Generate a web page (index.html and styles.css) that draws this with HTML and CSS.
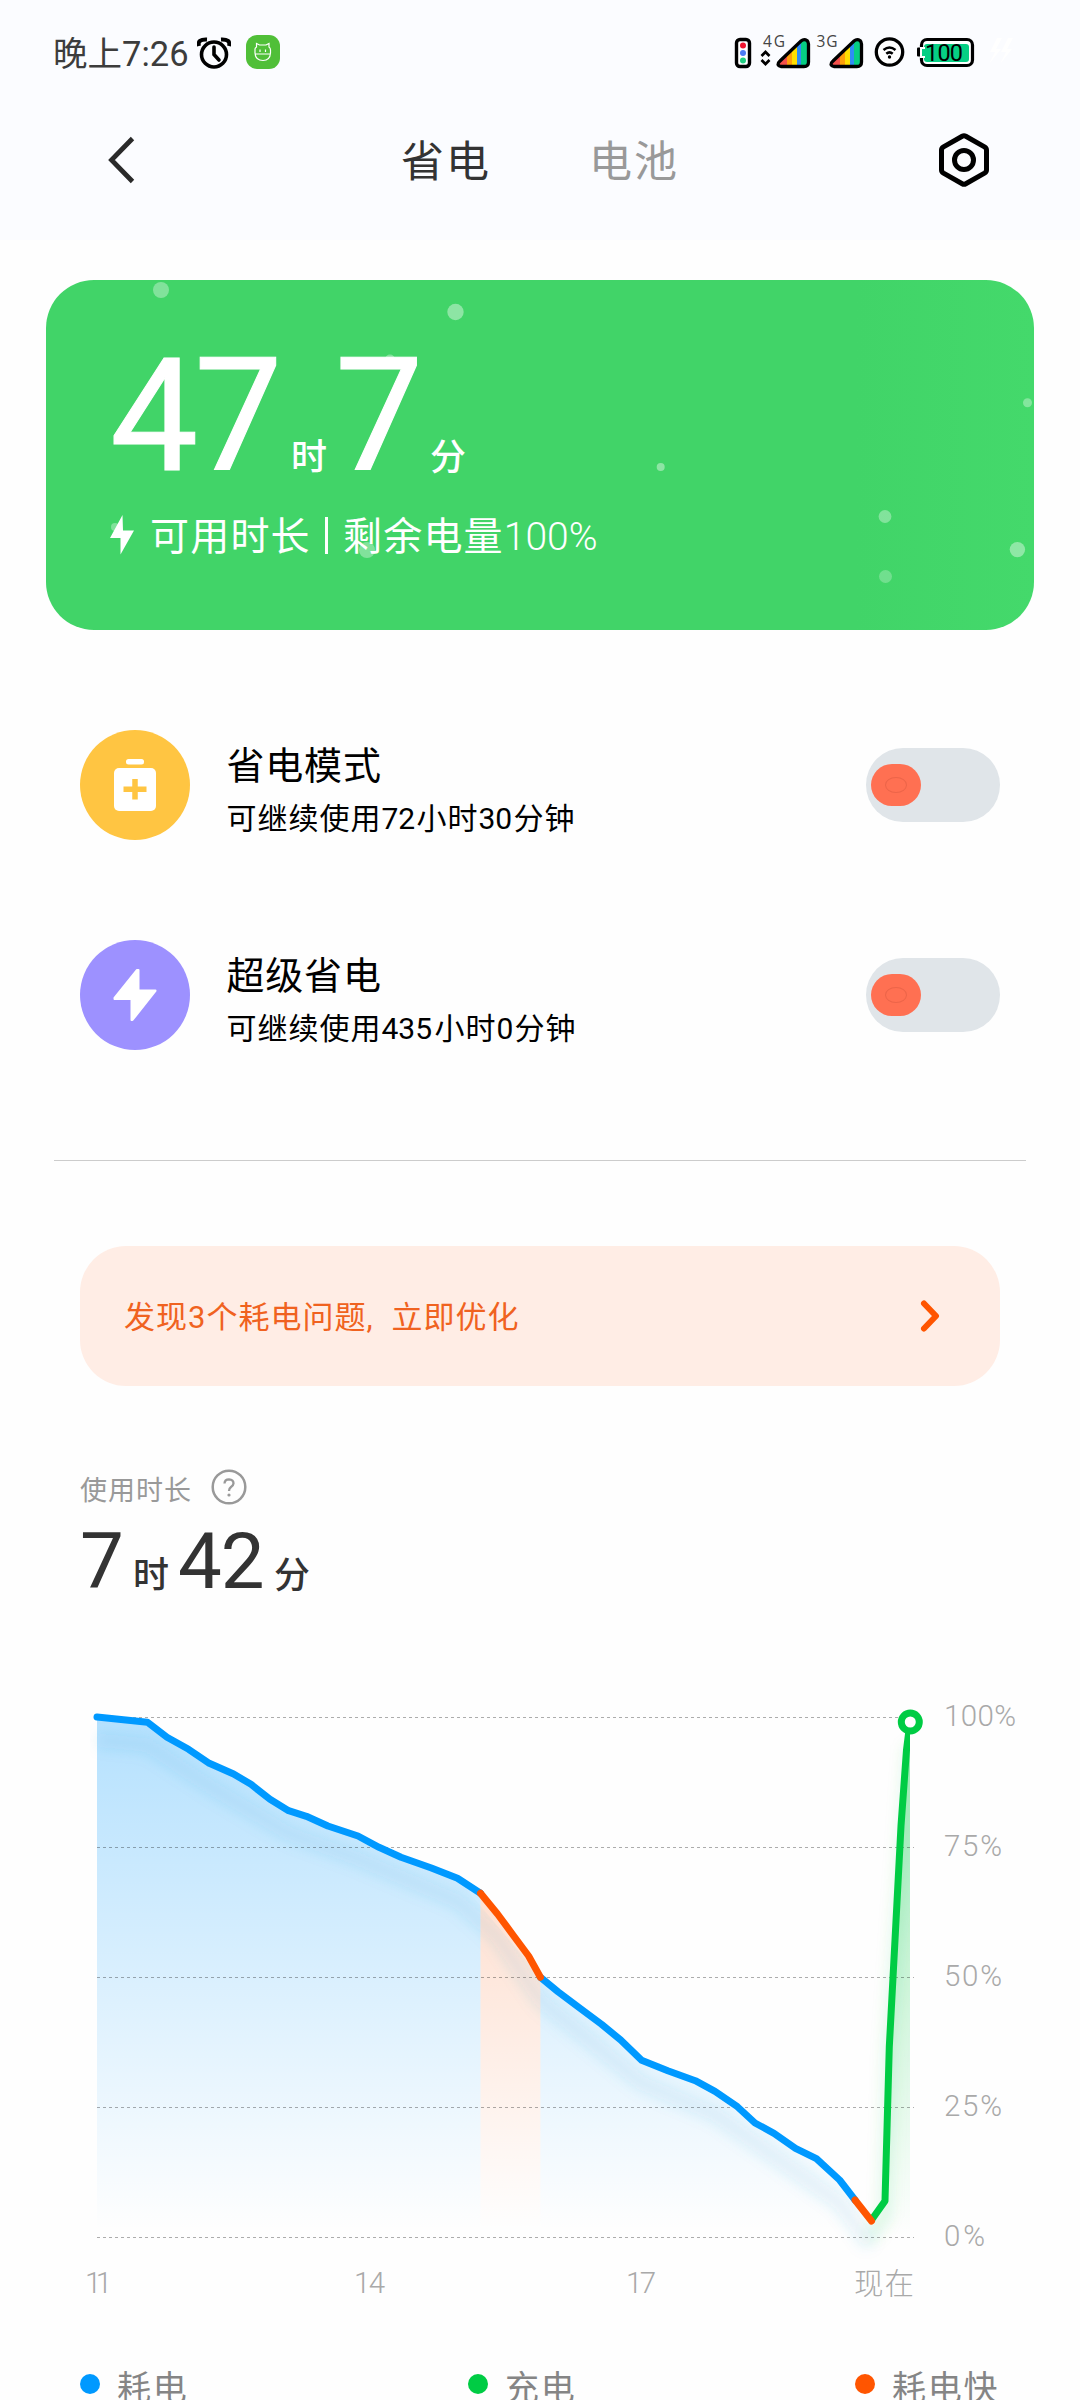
FILE: index.html
```html
<!DOCTYPE html>
<html lang="zh-CN">
<head>
<meta charset="utf-8">
<title>省电</title>
<link rel="stylesheet" href="styles.css">
</head>
<body>
<header class="header">
  <div class="status">
    <span class="clock">晚上7:26</span>
    <svg class="alarm" width="34" height="36" viewBox="197 36 34 36"><path d="M199 46Q197 39 207 39.500M229 46Q231 39 221 39.500" fill="none" stroke="#000" stroke-width="4"/><circle cx="214" cy="54.500" r="12.500" fill="none" stroke="#000" stroke-width="3.600"/><path d="M214 47V54.500L219 60" fill="none" stroke="#000" stroke-width="3.600" stroke-linecap="round"/></svg>
    <svg class="app" width="34" height="34" viewBox="246 35 34 34"><rect x="246" y="35" width="34" height="34" rx="11" fill="#50bf38"/><g fill="none" stroke="#fff" stroke-width="1.200"><path d="M255 53V49Q255 48 256.500 47V43.500L259.500 45H266L269 43.500V47Q270.500 48 270.500 50V53Q270 60.500 263 60.500Q255.500 60.500 255 53ZM255.500 54H270"/><path d="M260 49.500V52M265.500 49.500V52"/></g></svg>
    <svg class="indicators" width="300" height="44" viewBox="730 30 300 44">
      <rect x="736.500" y="39.500" width="13" height="27" rx="3.500" fill="#fff" stroke="#000" stroke-width="3.400"/>
      <circle cx="743" cy="45.500" r="3" fill="#f0142f"/><circle cx="743" cy="53" r="3" fill="#4b7bf5"/><circle cx="743" cy="60.500" r="3" fill="#21cf83"/>
      <path d="M761.500 56L765.500 52L769.500 56M761.500 60L765.500 64L769.500 60" fill="none" stroke="#000" stroke-width="2.700"/>
      <defs>
        <linearGradient id="rainbow"><stop offset=".28" stop-color="#f5504b"/><stop offset=".28" stop-color="#ff9f0a"/><stop offset=".45" stop-color="#ff9f0a"/><stop offset=".45" stop-color="#ffe000"/><stop offset=".62" stop-color="#ffe000"/><stop offset=".62" stop-color="#2f8df5"/><stop offset=".77" stop-color="#2f8df5"/><stop offset=".77" stop-color="#06ce84"/></linearGradient>
        <path id="signal" d="M780 61L801 41Q804 38.500 807 40.500Q808.500 42 808.500 44V62Q808.500 66.500 804 66.500H781Q775.500 65 780 61Z" fill="url(#rainbow)" stroke="#000" stroke-width="3.300"/>
      </defs>
      <use href="#signal"/><use href="#signal" x="53"/>
      <text x="763" y="46.500" class="net" textLength="22">4G</text><text x="816.500" y="46.500" class="net" textLength="21">3G</text>
      <circle cx="889.500" cy="52" r="13.200" fill="#fff" stroke="#000" stroke-width="3.300"/>
      <path d="M883.500 50Q889.500 45 895.500 50M886.300 53.800Q889.500 51 892.700 53.800" fill="none" stroke="#000" stroke-width="2.500"/><circle cx="889.500" cy="57" r="1.700"/>
      <rect x="921.500" y="39.500" width="51" height="26" rx="5.500" fill="#fff" stroke="#000" stroke-width="3.200"/><rect x="917" y="47.500" width="3.500" height="9" rx="1"/><rect x="924" y="44" width="45" height="18" rx="3" fill="#06cf84"/><rect x="920" y="47" width="5" height="11" fill="#fff"/><rect x="922" y="49" width="4" height="7" fill="#06cf84"/>
      <text x="925" y="61" class="battery" textLength="38">100</text>
      <path d="M997 38L990 52H995L989 64L1001 49H996L1002 38ZM1008 38L1001 52H1006L1000 64L1012 49H1007L1013 38Z" fill="#fff"/>
    </svg>
  </div>
  <nav class="nav">
    <svg class="back" width="30" height="50" viewBox="0 0 30 50"><path d="M25.500 3.500L4.500 25L25.500 46.500" fill="none" stroke="#2a2a2a" stroke-width="4.800"/></svg>
    <span class="tab active">省电</span>
    <span class="tab">电池</span>
    <svg class="gear" width="56" height="60" viewBox="936 130 56 60"><path d="M962.200 136.300Q964 135.300 965.800 136.300L984.500 146.800Q986.500 148 986.500 150V170Q986.500 172 984.500 173.200L965.800 183.700Q964 184.700 962.200 183.700L943.500 173.200Q941.500 172 941.500 170V150Q941.500 148 943.500 146.800Z" fill="none" stroke="#000" stroke-width="5"/><circle cx="964" cy="160" r="9.500" fill="none" stroke="#000" stroke-width="5"/></svg>
  </nav>
</header>
<main>
  <section class="card">
    <svg class="bubbles" width="988" height="350" viewBox="46 280 988 350" fill="#fff"><g fill-opacity=".34"><circle cx="161" cy="290" r="8"/><circle cx="390" cy="359.500" r="5"/><circle cx="115" cy="527" r="4"/><circle cx="367" cy="550" r="8"/><circle cx="885" cy="516.500" r="6.400"/><circle cx="1027.500" cy="402.700" r="4.500"/></g><g fill-opacity=".4"><circle cx="455.500" cy="312" r="8.200"/><circle cx="660.700" cy="467" r="4"/><circle cx="1017.400" cy="549.600" r="7.700"/></g><circle cx="885.500" cy="576.500" r="6.500" fill-opacity=".25"/></svg>
    <div class="remain"><span class="n47">47</span><span class="unit u1">时</span><span class="n7">7</span><span class="unit u2">分</span></div>
    <div class="remain-note"><svg width="26" height="40" viewBox="0 0 26 40"><path d="M12.500 0L0 23H10.500V39.500L24 15.500H13Z" fill="#fff"/></svg><span class="note-a">可用时长</span><i class="bar"></i><span class="note-b">剩余电量</span><span class="note-c">100%</span></div>
  </section>
  <section class="modes">
    <div class="mode">
      <svg class="mode-icon" width="110" height="110" viewBox="0 0 110 110"><circle cx="55" cy="55" r="55" fill="#ffc542"/><rect x="46" y="29" width="18" height="5.500" rx="2.500" fill="#fff"/><rect x="34" y="38" width="42" height="43" rx="5" fill="#fff"/><path d="M55 49V69.500M43.500 59.200H66.500" stroke="#ffc542" stroke-width="5.500"/></svg>
      <div class="mode-text"><div class="title">省电模式</div><div class="sub">可继续使用<b class="num2">72</b>小时<b class="num2">30</b>分钟</div></div>
      <div class="toggle"><div class="thumb"><i></i></div></div>
    </div>
    <div class="mode">
      <svg class="mode-icon" width="110" height="110" viewBox="0 0 110 110"><circle cx="55" cy="55" r="55" fill="#9d91ff"/><path d="M57 30L34.500 58V59H51.500V80H52.500L75.500 51V50.500H58.500V30Z" fill="#fff" stroke="#fff" stroke-width="2" stroke-linejoin="round"/></svg>
      <div class="mode-text"><div class="title">超级省电</div><div class="sub">可继续使用<b class="num3">435</b>小时<b class="num1">0</b>分钟</div></div>
      <div class="toggle"><div class="thumb"><i></i></div></div>
    </div>
  </section>
  <hr class="divider">
  <section class="banner"><span>发现3个耗电问题<em>,</em>立即优化</span><svg width="24" height="34" viewBox="0 0 24 34"><path d="M5 4.500L17 17L5 29.500" fill="none" stroke="#ff5500" stroke-width="6" stroke-linecap="round" stroke-linejoin="round"/></svg></section>
  <section class="usage">
    <div class="usage-label"><span>使用时长</span><svg width="36" height="36" viewBox="0 0 36 36"><circle cx="18" cy="18" r="16.300" fill="none" stroke="#999" stroke-width="2.500"/><path d="M13.500 14.500Q13.700 10.300 18 10.300Q22.500 10.500 22.500 14.300Q22.300 16.500 20 18Q18 19.500 18 22" fill="none" stroke="#999" stroke-width="2.300"/><circle cx="18" cy="26" r="1.600" fill="#999"/></svg></div>
    <div class="usage-time"><span class="h7">7</span><span class="unit t1">时</span><span class="m42">42</span><span class="unit t2">分</span></div>
  </section>
  <svg class="chart" width="1080" height="700" viewBox="0 1640 1080 700">
    <defs>
      <linearGradient id="blueFill" gradientUnits="userSpaceOnUse" x1="0" y1="1717" x2="0" y2="2230"><stop stop-color="#0099ff" stop-opacity=".29"/><stop offset="1" stop-color="#0099ff" stop-opacity="0"/></linearGradient>
      <linearGradient id="orangeFill" gradientUnits="userSpaceOnUse" x1="0" y1="1717" x2="0" y2="2230"><stop stop-color="#ff5500" stop-opacity=".27"/><stop offset="1" stop-color="#ff5500" stop-opacity="0"/></linearGradient>
      <linearGradient id="greenFill" gradientUnits="userSpaceOnUse" x1="0" y1="1717" x2="0" y2="2237"><stop stop-color="#00cc44" stop-opacity=".38"/><stop offset="1" stop-color="#00cc44" stop-opacity="0"/></linearGradient>
      <filter id="soft" filterUnits="userSpaceOnUse" x="80" y="1690" width="850" height="600"><feGaussianBlur stdDeviation="7"/></filter>
      <clipPath id="plot"><path d="M90 1690H910V2270H90Z"/></clipPath>
      <clipPath id="under"><path d="M90 1717H96L147.500 1722.300L209.300 1763.300L288.600 1810.700L457.500 1878.300L540.400 1977.300L641.600 2060.300L737.400 2106.700L839.600 2180L870.400 2222L884 2201L888.400 2046.700L910 1722V2290H90Z"/></clipPath>
    </defs>
    <path fill="url(#blueFill)" d="M97 1717L147.500 1722.300L167 1737.300L188.600 1749.300L209.300 1763.300L233.600 1774L251 1784.300L270 1799.300L288.600 1810.700L306.400 1816.300L327.900 1826L358 1836L379 1847.300L401 1857.300L431.400 1868L457.500 1878.300L480.500 1893.300V2237H97ZM540.400 1977.300L558 1991.700L579 2007.500L601.500 2024.300L620.700 2040L641.600 2060.300L667.800 2070.700L695.300 2080.700L715 2091.300L737.400 2106.700L755 2123L774 2133.300L795.500 2148.300L816.400 2158.700L839.600 2180L854.500 2200V2237H540.400Z"/>
    <path fill="url(#orangeFill)" d="M480.500 1893.300L497.500 1914L528.600 1956L540.400 1977.300V2237H480.500ZM854.500 2200L871 2222V2237H854.500Z"/>
    <path fill="url(#greenFill)" d="M871 2222L885 2201L889.300 2046.700L895 1940L901 1826L906.500 1750L910 1722V2237H871Z"/>
    <g clip-path="url(#under)"><path transform="translate(0 23)" d="M97 1717L147.500 1722.300L209.300 1763.300L288.600 1810.700L358 1836L457.500 1878.300L497.500 1914L540.400 1977.300L641.600 2060.300L715 2091.300L774 2133.300L839.600 2180L870.400 2222" fill="none" stroke="#2b9cd0" stroke-opacity=".12" stroke-width="14" filter="url(#soft)"/></g>
    <g clip-path="url(#plot)"><path d="M870.400 2238L885 2215L889.300 2046.700L910 1745" fill="none" stroke="#00cc44" stroke-opacity=".13" stroke-width="12" filter="url(#soft)"/></g>
    <path d="M97 1717.500H914M97 1847.500H914M97 1977.500H914M97 2107.500H914M97 2237.500H914" stroke="#000" stroke-opacity=".32" stroke-width="1" stroke-dasharray="3 3"/>
    <g fill="none" stroke-width="7" stroke-linejoin="round" clip-path="url(#plot)">
      <path stroke="#0099ff" stroke-linecap="round" d="M97 1717L147.500 1722.300L167 1737.300L188.600 1749.300L209.300 1763.300L233.600 1774L251 1784.300L270 1799.300L288.600 1810.700L306.400 1816.300L327.900 1826L358 1836L379 1847.300L401 1857.300L431.400 1868L457.500 1878.300L480.500 1893.300M540.400 1977.300L558 1991.700L579 2007.500L601.500 2024.300L620.700 2040L641.600 2060.300L667.800 2070.700L695.300 2080.700L715 2091.300L737.400 2106.700L755 2123L774 2133.300L795.500 2148.300L816.400 2158.700L839.600 2180L855 2200"/>
      <path stroke="#00cc44" d="M871.500 2220L885 2201L889.300 2046.700L895 1940L901 1826L906.500 1750L910 1722"/>
      <path stroke="#ff5500" stroke-linecap="round" d="M480.500 1893.300L497.500 1914L513 1935L528.600 1956L540.400 1977.300M855 2200L871.500 2221"/>
    </g>
    <circle cx="910.300" cy="1722" r="9" fill="#fff" stroke="#00cc44" stroke-width="7"/>
    <g class="axis">
      <text x="944" y="1726" textLength="72">100%</text><text x="944" y="1856" textLength="58">75%</text><text x="944" y="1986" textLength="58">50%</text><text x="944" y="2116" textLength="58">25%</text><text x="944" y="2246" textLength="41">0%</text>
      <text x="85" y="2293" textLength="27">11</text><text x="354" y="2293" textLength="31">14</text><text x="626" y="2293" textLength="30">17</text><text x="854" y="2294" textLength="60">现在</text>
    </g>
  </svg>
  <div class="legend"><span class="key blue">耗电</span><span class="key green">充电</span><span class="key orange">耗电快</span></div>
</main>
</body>
</html>
```
FILE: styles.css
```css
body { margin: 0; width: 1080px; height: 2400px; overflow: hidden; background: #fefefe; font-family: Roboto, "Noto Sans CJK SC", sans-serif; font-weight: 400; color: #000; }
svg { display: block; flex: none; }
.header { height: 240px; background: #fbfcff; }
.status { display: flex; align-items: center; height: 107px; padding-left: 53px; }
.clock { width: 144px; font-size: 34.500px; line-height: 50px; color: #3c3c3c; white-space: nowrap; }
.app { margin: -3px 0 0 15px; }
.indicators { margin: -3px 0 0 450px; }
.net { font: 400 15.500px "Open Sans", sans-serif; fill: #444; }
.battery { font: 400 23.500px Roboto, sans-serif; }
.nav { display: flex; align-items: center; height: 106px; padding-left: 107px; }
.tab { font-size: 43px; line-height: 60px; letter-spacing: 2px; padding-top: 4px; color: #999; }
.tab.active { margin: 0 98px 0 264px; color: #333; }
.gear { margin-left: 257px; }
.card { box-sizing: border-box; position: relative; height: 350px; margin: 40px 46px 0; padding: 76px 0 0 64px; border-radius: 48px; overflow: hidden; color: #fff; background: linear-gradient(90deg, #41d468 82%, #44d96b); }
.bubbles { position: absolute; left: 0; top: 0; }
.remain { display: flex; align-items: baseline; position: relative; height: 120px; line-height: 120px; font-size: 157px; }
.n47 { width: 181px; letter-spacing: -4px; -webkit-text-stroke: 1px #fff; }
.n7 { width: 95px; -webkit-text-stroke: 1px #fff; }
.unit { font-size: 36px; font-weight: 500; }
.u1 { width: 44px; }
.remain-note { display: flex; position: relative; margin-top: 36px; font-size: 39px; line-height: 50px; white-space: nowrap; }
.remain-note svg { margin: 3px 14px 0 0; }
.note-a, .note-b { letter-spacing: 1.200px; }
.note-a { width: 175px; }
.bar { width: 3px; height: 37px; margin: 5px 15px 0 0; background: #fff; }
.note-c { font-weight: 300; letter-spacing: 0; }
.modes { display: grid; gap: 100px; padding: 100px 80px 0; }
.mode { display: flex; height: 110px; }
.mode-text { width: 639px; padding: 13px 0 0 36.500px; white-space: nowrap; }
.title { font-size: 38px; line-height: 46px; letter-spacing: .800px; }
.sub { margin-top: 10px; font-size: 30px; line-height: 40px; letter-spacing: 1px; }
.sub b { display: inline-block; font-weight: 400; letter-spacing: 0; }
.num1 { width: 18px; }
.num2 { width: 35px; }
.num3 { width: 53px; }
.toggle { display: flex; align-items: center; box-sizing: border-box; width: 134px; height: 74px; margin: 18px 0 0; padding-left: 5px; border-radius: 37px; background: #e0e5e9; }
.thumb { display: grid; place-items: center; width: 50px; height: 42px; border-radius: 21px; background: #ff7052; }
.thumb i { box-sizing: border-box; width: 22px; height: 16px; border: 1px solid #ec6549; border-radius: 50%; }
.divider { height: 1px; margin: 110px 54px 0; border: 0; background: #ccc; }
.banner { display: flex; align-items: center; justify-content: space-between; box-sizing: border-box; height: 140px; margin: 85px 80px 0; padding: 0 57px 0 44px; border-radius: 46px; background: #ffede5; color: #f06220; font-size: 31px; }
.banner span { line-height: 40px; padding-top: 3px; letter-spacing: 1px; white-space: nowrap; }
.banner em { display: inline-block; width: 25px; font-style: normal; }
.usage { padding: 83px 80px 0; }
.usage-label { display: flex; height: 36px; align-items: center; color: #999; font-size: 27px; }
.usage-label span { padding-top: 3px; letter-spacing: 1px; }
.usage-label svg { margin-left: 19px; }
.usage-time { display: flex; align-items: baseline; height: 80px; margin-top: 17px; line-height: 80px; font-size: 78px; color: #333; }
.h7 { width: 53px; }
.m42 { width: 96px; letter-spacing: -1px; }
.t1 { width: 45px; }
.chart { margin-top: 38px; }
.axis { font-size: 29.500px; font-weight: 300; fill: #a9a9a9; }
.legend { display: grid; grid-template-columns: 388px 387px auto; padding: 20px 0 0 80px; }
.key { display: flex; align-items: center; height: 50px; font-size: 34px; letter-spacing: 1.800px; color: #858585; white-space: nowrap; }
.key::before { content: ""; width: 20px; height: 20px; margin: -3px 17px 0 0; border-radius: 50%; background: currentColor; }
.blue::before { background: #0099ff; }
.green::before { background: #00cc44; }
.orange::before { background: #ff5500; }
```
